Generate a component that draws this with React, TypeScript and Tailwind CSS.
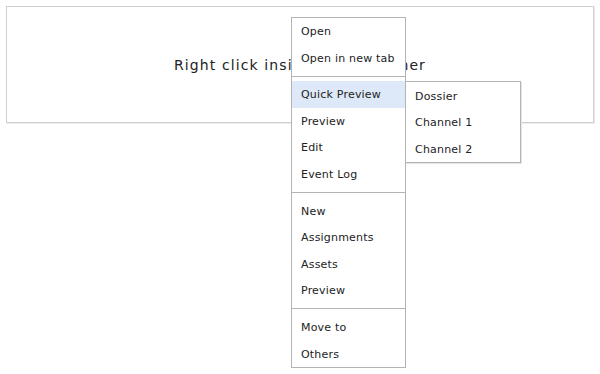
type Item = { label: string; active?: boolean };

const groups: Item[][] = [
  [{ label: 'Open' }, { label: 'Open in new tab' }],
  [{ label: 'Quick Preview', active: true }, { label: 'Preview' }, { label: 'Edit' }, { label: 'Event Log' }],
  [{ label: 'New' }, { label: 'Assignments' }, { label: 'Assets' }, { label: 'Preview' }],
  [{ label: 'Move to' }, { label: 'Others' }],
];

const subItems = ['Dossier', 'Channel 1', 'Channel 2'];

function MenuRow({ label, active }: Item) {
  return (
    <div
      className={`h-[26.6px] flex items-center whitespace-nowrap pt-[2px] pl-[9px] ${active ? 'bg-[#dde9f8]' : ''}`}
    >
      {label}
    </div>
  );
}

export default function App() {
  return (
    <div
      className="relative w-[600px] h-[374px] bg-white text-[#222] overflow-hidden"
      style={{ fontFamily: '"DejaVu Sans", Verdana, sans-serif' }}
    >
      <div className="m-[6px] h-[117px] border border-[#cfcfcf] shadow-[1px_1px_0_#ececec] flex items-center justify-center">
        <span className="text-[14px] tracking-[1.1px] text-[#222] mt-[2px]">Right click inside the container</span>
      </div>

      {/* context menu */}
      <div className="absolute left-[291px] top-[17px] w-[115px] bg-white border border-[#b3b3b3] text-[11px] tracking-[0.2px] text-[#222]">
        {groups.map((g, i) => (
          <div key={i}>
            {i > 0 && <div className="my-[4.5px] h-px bg-[#b3b3b3]" />}
            {g.map((it) => (
              <MenuRow key={it.label + i} {...it} />
            ))}
          </div>
        ))}
      </div>

      {/* submenu */}
      <div className="absolute left-[405px] top-[81px] w-[116px] bg-white border border-[#b3b3b3] shadow-[1px_1px_0_#e6e6e6] text-[11px] tracking-[0.2px] text-[#222]">
        {subItems.map((s) => (
          <div key={s} className="h-[26.6px] flex items-center whitespace-nowrap pt-[3px] pl-[9px]">
            {s}
          </div>
        ))}
      </div>
    </div>
  );
}
